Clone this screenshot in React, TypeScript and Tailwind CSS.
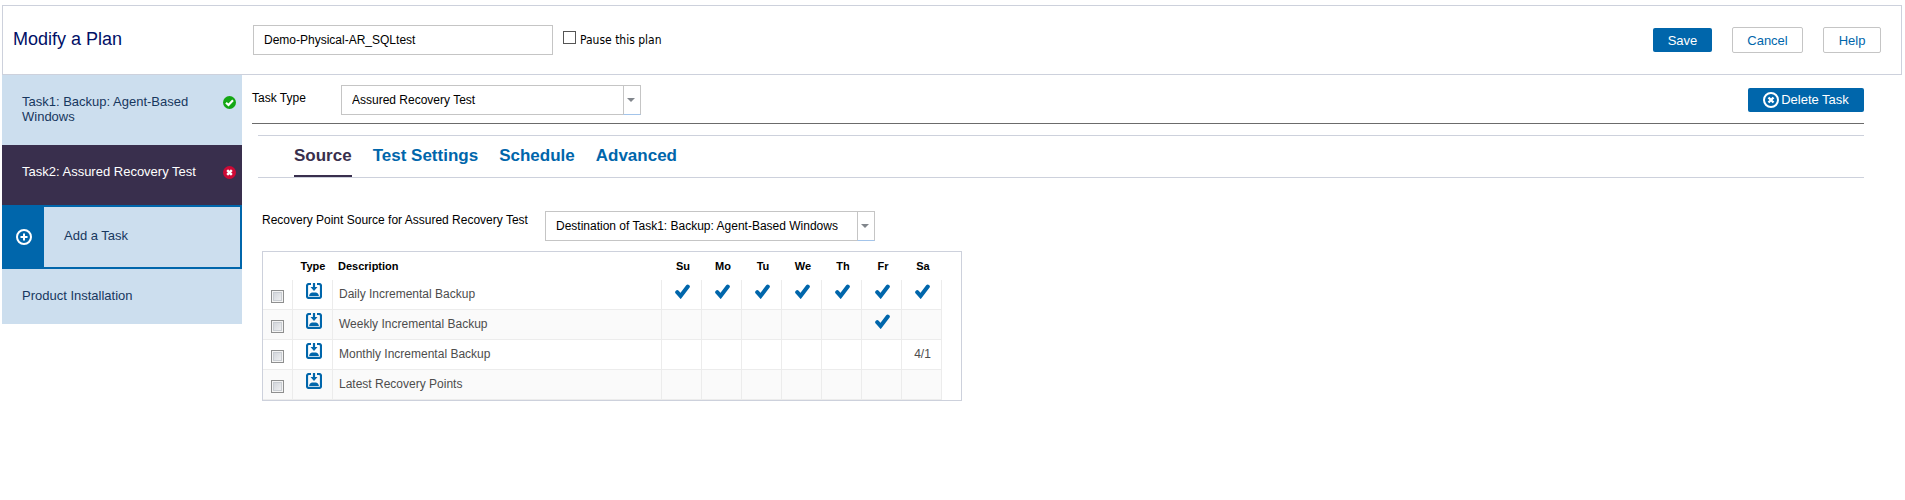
import { useState } from "react";

const tabs = ["Source", "Test Settings", "Schedule", "Advanced"];

const days = ["Su", "Mo", "Tu", "We", "Th", "Fr", "Sa"];

const rows = [
  { label: "Daily Incremental Backup", cells: ["x", "x", "x", "x", "x", "x", "x"] },
  { label: "Weekly Incremental Backup", cells: ["", "", "", "", "", "x", ""] },
  { label: "Monthly Incremental Backup", cells: ["", "", "", "", "", "", "4/1"] },
  { label: "Latest Recovery Points", cells: ["", "", "", "", "", "", ""] }
];

function BackupIcon() {
  return (
    <svg viewBox="0 0 16 16" className="mx-auto block h-4 w-4" fill="none" aria-hidden="true">
      <path d="M5 1H3a2 2 0 0 0-2 2v10a2 2 0 0 0 2 2h10a2 2 0 0 0 2-2V3a2 2 0 0 0-2-2h-2" stroke="#0066ab" strokeWidth="2.2" />
      <path d="M6.900 0h2.200v4h2.400L8 8 4.500 4h2.400z" fill="#0066ab" />
      <path d="M3 13.300c.2-1.600 1.200-3.900 3-3.900h4c1.800 0 2.800 2.300 3 3.900z" fill="#0066ab" />
    </svg>
  );
}

function CheckMark() {
  return (
    <svg viewBox="0 0 15 15" className="mx-auto block h-[15px] w-[15px]" aria-label="Yes" role="img">
      <path d="M2.200 8.200 5.600 12 12.800 2.500" fill="none" stroke="#0066ab" strokeWidth="4" strokeLinecap="round" />
    </svg>
  );
}

function OkIcon() {
  return (
    <svg viewBox="0 0 13 13" className="mt-0.5 h-[13px] w-[13px] shrink-0" aria-hidden="true">
      <circle cx="6.500" cy="6.500" r="6.500" fill="#14a714" />
      <path d="M3 6.700 5.500 9 10 4.300" fill="none" stroke="#fff" strokeWidth="2.200" />
    </svg>
  );
}

function ErrorIcon() {
  return (
    <svg viewBox="0 0 13 13" className="mt-0.5 h-[13px] w-[13px] shrink-0" aria-hidden="true">
      <circle cx="6.500" cy="6.500" r="6.500" fill="#cc0a36" />
      <path d="m4.200 4.200 4.600 4.600M8.800 4.200 4.200 8.800" stroke="#fff" strokeWidth="2.400" />
    </svg>
  );
}

function CircleIcon({ cross = false }: { cross?: boolean }) {
  return (
    <svg viewBox="0 0 16 16" className="h-4 w-4 shrink-0" fill="none" stroke="#fff" strokeWidth="2" aria-hidden="true">
      <circle cx="8" cy="8" r="7" />
      {cross ? <path d="m5.500 5.500 5 5M10.500 5.500l-5 5" strokeWidth="2.400" /> : <path d="M8 4.500v7M4.500 8h7" />}
    </svg>
  );
}

function Dropdown({ id, value, className }: { id: string; value: string; className: string }) {
  return (
    <div className={`relative ${className}`}>
      <select
        id={id}
        className="block h-[30px] w-full appearance-none border border-[#c5c5c5] bg-white pr-6 pl-[10px] text-[12px] text-black outline-none"
      >
        <option>{value}</option>
      </select>
      <span className="pointer-events-none absolute inset-y-0 right-0 flex w-[18px] items-center border border-[#c5c5c5] border-b-[#a3c4ea] pl-[3px]">
        <svg viewBox="0 0 8 4" className="h-1 w-2" aria-hidden="true">
          <path d="M0 0h8L4 4z" fill="#81868c" />
        </svg>
      </span>
    </div>
  );
}

export default function App() {
  const [activeTab, setActiveTab] = useState("Source");

  return (
    <div className="bg-white pt-[5px] pr-[3px] pl-0.5 font-['Liberation_Sans',Arial,sans-serif] text-[12px] text-black">
      <header className="flex h-[70px] items-center border border-[#cdd1dc] pr-5 pl-[10px]">
        <h1 className="w-60 pb-0.5 text-[18px] text-[#000f66]">Modify a Plan</h1>
        <input
          aria-label="Plan name"
          defaultValue="Demo-Physical-AR_SQLtest"
          className="h-[30px] w-[300px] border border-[#c5c5c5] px-[10px] text-[12px] outline-none"
        />
        <label className="ml-[10px] flex items-start gap-1 font-['DejaVu_Sans_Condensed','DejaVu_Sans',sans-serif] leading-[18px]">
          <input type="checkbox" className="h-[13px] w-[13px] appearance-none border border-[#555] bg-white checked:bg-[#0066ab]" />
          Pause this plan
        </label>
        <div className="ml-auto flex items-center gap-5 text-[13px]">
          <button type="button" className="h-6 w-[59px] rounded-xs bg-[#0066ab] pt-0.5 text-white">Save</button>
          <button type="button" className="h-[26px] w-[71px] rounded-xs border border-[#c5c5c5] pt-0.5 text-[#0066ab]">Cancel</button>
          <button type="button" className="h-[26px] w-[58px] rounded-xs border border-[#c5c5c5] pt-0.5 text-[#0066ab]">Help</button>
        </div>
      </header>

      <div className="flex items-start">
        <nav className="w-60 shrink-0 text-[13px] leading-[15px] text-[#17375e]">
          <button type="button" className="flex h-[70px] w-full items-start bg-[#ccdeee] pt-[19px] pr-1.5 pl-5 text-left">
            <span className="flex-1">
              Task1: Backup: Agent-Based
              <br />
              Windows
            </span>
            <OkIcon />
          </button>
          <button type="button" className="flex h-[60px] w-full items-start bg-[#392f4d] pt-[19px] pr-1.5 pl-5 text-left text-white">
            <span className="flex-1">Task2: Assured Recovery Test</span>
            <ErrorIcon />
          </button>
          <button type="button" className="flex h-16 w-full border-2 border-[#0066ab] bg-[#ccdeee] text-left">
            <span className="flex h-full w-10 items-center justify-center bg-[#0066ab]">
              <CircleIcon />
            </span>
            <span className="self-center pb-1 pl-5">Add a Task</span>
          </button>
          <button type="button" className="block h-[55px] w-full bg-[#ccdeee] pb-0.5 pl-5 text-left">Product Installation</button>
        </nav>

        <main className="min-w-0 flex-1 pr-[38px] pl-[10px]">
          <div className="flex h-[49px] items-start border-b border-[#6b6b6b] pt-[10px]">
            <label htmlFor="task-type" className="w-[89px] pt-1">Task Type</label>
            <Dropdown id="task-type" value="Assured Recovery Test" className="w-[300px]" />
            <button type="button" className="mt-[3px] ml-auto flex h-6 w-[116px] items-center justify-center gap-0.5 rounded-xs bg-[#0066ab] text-[13px] text-white">
              <CircleIcon cross />
              Delete Task
            </button>
          </div>

          <div role="tablist" className="mt-[11px] ml-[6px] flex h-[43px] gap-[21px] border-y border-[#cdd1dc] pl-9 text-[17px] font-bold">
            {tabs.map((tab) => (
              <button
                key={tab}
                type="button"
                role="tab"
                aria-selected={tab === activeTab}
                onClick={() => setActiveTab(tab)}
                className={tab === activeTab ? "border-b-2 border-[#392f4d] text-[#392f4d]" : "border-b-2 border-transparent text-[#0066ab]"}
              >
                {tab}
              </button>
            ))}
          </div>

          <section className="pt-[33px] pl-[10px]">
            <div className="flex items-start">
              <label htmlFor="source" className="w-[283px]">Recovery Point Source for Assured Recovery Test</label>
              <Dropdown id="source" value="Destination of Task1: Backup: Agent-Based Windows" className="w-[330px]" />
            </div>

            <div className="mt-[10px] max-w-[700px] border border-[#cdd1dc]">
              <table className="w-[679px] table-fixed border-separate border-spacing-0">
                <thead>
                  <tr className="h-7 text-[11px]">
                    <th className="w-[30px]" />
                    <th className="w-10 text-center">Type</th>
                    <th className="pl-[5px] text-left">Description</th>
                    {days.map((day) => (
                      <th key={day} className="w-10 pl-0.5 text-center">{day}</th>
                    ))}
                  </tr>
                </thead>
                <tbody>
                  {rows.map((row) => (
                    <tr key={row.label} className="h-[30px] text-[#4d4d4d] even:bg-[#fafafa]">
                      <td className="border-r border-b border-[#ececec] pt-[10px] pl-2 align-top">
                        <input
                          type="checkbox"
                          aria-label={row.label}
                          className="block h-[13px] w-[13px] appearance-none border border-[#8e8f8f] bg-linear-to-br from-[#cbcfd5] to-[#f6f6f6] shadow-[inset_0_0_0_1px_#f4f4f4,inset_0_0_0_2px_#c9cdd2] checked:bg-[#0066ab]"
                        />
                      </td>
                      <td className="border-r border-b border-[#ececec] pt-[3px] pl-0.5 align-top">
                        <BackupIcon />
                      </td>
                      <td className="border-r border-b border-[#ececec] pb-0.5 pl-[6px]">{row.label}</td>
                      {row.cells.map((cell, i) => (
                        <td
                          key={days[i]}
                          className={`border-r border-b border-[#ececec] pl-0.5 text-center ${cell === "x" ? "pt-1 align-top" : "pb-0.5"}`}
                        >
                          {cell === "x" ? <CheckMark /> : cell}
                        </td>
                      ))}
                    </tr>
                  ))}
                </tbody>
              </table>
            </div>
          </section>
        </main>
      </div>
    </div>
  );
}
